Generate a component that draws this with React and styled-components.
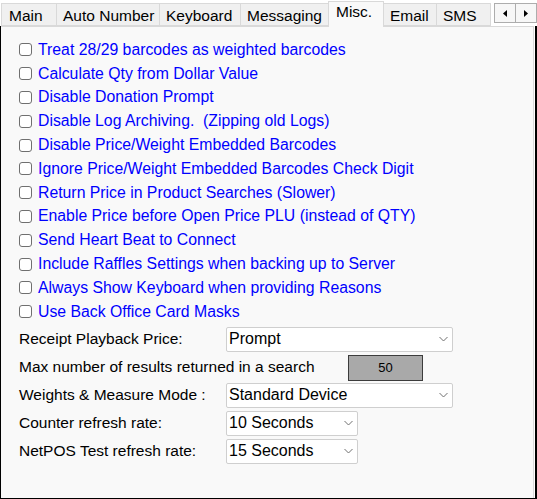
import React from "react";
import styled, { createGlobalStyle } from "styled-components";

const Global = createGlobalStyle`
  html, body { margin: 0; padding: 0; background: #ffffff; }
  * { box-sizing: border-box; }
`;

const Window = styled.div`
  width: 537px;
  height: 499px;
  display: flex;
  flex-direction: column;
  font-family: "Liberation Sans", Arial, sans-serif;
  background: #ffffff;
`;

const TabStrip = styled.div`
  height: 26px;
  display: flex;
  align-items: flex-end;
  padding-left: 1px;
  position: relative;
  z-index: 1;
`;

const Tab = styled.div`
  width: ${(p) => p.$w}px;
  height: ${(p) => (p.$active ? 26 : 23)}px;
  margin-bottom: ${(p) => (p.$active ? -1 : 0)}px;
  margin-left: -1px;
  padding: ${(p) => (p.$active ? "1px 0 0 7px" : "3px 0 0 6px")};
  border: 1px solid #d9d9d9;
  border-bottom: ${(p) => (p.$active ? "none" : "1px solid #d9d9d9")};
  background: ${(p) => (p.$active ? "#f9f9f9" : "#f0f0f0")};
  font-size: 15.5px;
  color: #000;
  white-space: nowrap;
  overflow: hidden;
  &:first-child { margin-left: 0; padding-left: 7px; }
`;

const Scroller = styled.div`
  display: flex;
  margin-left: 3px;
  align-self: flex-start;
  margin-top: 3px;
`;

const ScrollBtn = styled.div`
  width: 22px;
  height: 20px;
  border: 1px solid #adadad;
  background: #f7f7f7;
  display: flex;
  align-items: center;
  justify-content: center;
  & + & { margin-left: -1px; }
`;

const Frame = styled.div`
  flex: 1;
  display: flex;
  border-left: 1px solid #000;
  border-right: 2px solid #000;
  border-bottom: 1px solid #000;
`;

const Panel = styled.div`
  flex: 1;
  background: #f9f9f9;
  border: 1px solid #d9d9d9;
  border-left: none;
  border-bottom: none;
  margin-right: 1px;
  padding: 11px 0 0 18px;
  display: flex;
  flex-direction: column;
`;

const CheckRow = styled.label`
  height: 23.8px;
  display: flex;
  align-items: center;
  gap: 6px;
  color: #0000ff;
  font-size: 15.8px;
  white-space: pre;
`;

const Box = styled.input.attrs({ type: "checkbox" })`
  appearance: none;
  margin: 0;
  width: 13px;
  height: 13px;
  border: 1px solid #6f6f6f;
  border-radius: 3px;
  background: #ffffff;
  flex: none;
`;

const Form = styled.div`
  margin-top: 3px;
  display: flex;
  flex-direction: column;
  gap: 3px;
`;

const FormRow = styled.div`
  height: 25px;
  display: flex;
  align-items: center;
`;

const Label = styled.div`
  width: ${(p) => p.$w}px;
  flex: none;
  font-size: 15.5px;
  color: #000;
  white-space: nowrap;
`;

const Dropdown = styled.div`
  width: ${(p) => p.$w}px;
  height: 25px;
  border: 1px solid #cfcfcf;
  border-radius: 2px;
  background: #ffffff;
  display: flex;
  align-items: center;
  justify-content: space-between;
  padding: 0 4px 0 2px;
  font-size: 16px;
  color: #000;
`;

const NumberBox = styled.div`
  width: 75px;
  height: 26px;
  margin-top: 1px;
  border: 1px solid #3c3c3c;
  background: #a9a9a9;
  display: flex;
  align-items: center;
  justify-content: center;
  font-size: 13px;
  color: #000;
`;

const Chevron = () => (
  <svg width="9" height="6" viewBox="0 0 9 6">
    <path d="M0.5 1 L4.5 5 L8.5 1" fill="none" stroke="#707070" strokeWidth="1" />
  </svg>
);

const Tri = ({ dir }) => (
  <svg width="4" height="7" viewBox="0 0 4 7">
    {dir === "left" ? <path d="M4 0 L0 3.5 L4 7 Z" fill="#000" /> : <path d="M0 0 L4 3.5 L0 7 Z" fill="#000" />}
  </svg>
);

const tabs = [
  ["Main", 56],
  ["Auto Number", 104],
  ["Keyboard", 82],
  ["Messaging", 89],
  ["Misc.", 56, true],
  ["Email", 54],
  ["SMS", 55],
];

const checks = [
  "Treat 28/29 barcodes as weighted barcodes",
  "Calculate Qty from Dollar Value",
  "Disable Donation Prompt",
  "Disable Log Archiving.  (Zipping old Logs)",
  "Disable Price/Weight Embedded Barcodes",
  "Ignore Price/Weight Embedded Barcodes Check Digit",
  "Return Price in Product Searches (Slower)",
  "Enable Price before Open Price PLU (instead of QTY)",
  "Send Heart Beat to Connect",
  "Include Raffles Settings when backing up to Server",
  "Always Show Keyboard when providing Reasons",
  "Use Back Office Card Masks",
];

export default function App() {
  return (
    <Window>
      <Global />
      <TabStrip>
        {tabs.map(([t, w, a]) => (
          <Tab key={t} $w={w} $active={a}>
            {t}
          </Tab>
        ))}
        <Scroller>
          <ScrollBtn><Tri dir="left" /></ScrollBtn>
          <ScrollBtn><Tri dir="right" /></ScrollBtn>
        </Scroller>
      </TabStrip>
      <Frame>
        <Panel>
          {checks.map((c) => (
            <CheckRow key={c}>
              <Box />
              {c}
            </CheckRow>
          ))}
          <Form>
            <FormRow>
              <Label $w={207}>Receipt Playback Price:</Label>
              <Dropdown $w={227}>Prompt<Chevron /></Dropdown>
            </FormRow>
            <FormRow>
              <Label $w={329}>Max number of results returned in a search</Label>
              <NumberBox>50</NumberBox>
            </FormRow>
            <FormRow>
              <Label $w={207}>Weights &amp; Measure Mode :</Label>
              <Dropdown $w={227}>Standard Device<Chevron /></Dropdown>
            </FormRow>
            <FormRow>
              <Label $w={207}>Counter refresh rate:</Label>
              <Dropdown $w={132}>10 Seconds<Chevron /></Dropdown>
            </FormRow>
            <FormRow>
              <Label $w={207}>NetPOS Test refresh rate:</Label>
              <Dropdown $w={132}>15 Seconds<Chevron /></Dropdown>
            </FormRow>
          </Form>
        </Panel>
      </Frame>
    </Window>
  );
}
